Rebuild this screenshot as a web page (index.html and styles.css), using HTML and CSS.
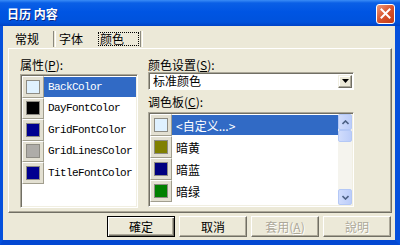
FILE: index.html
```html
<!DOCTYPE html>
<html lang="zh">
<head>
    <meta charset="UTF-8">
    <title>日历 内容</title>
    <link rel="stylesheet" href="styles.css">
</head>
<body>
    <div class="window">
        <div class="titlebar">
            <span class="title">日历 内容</span>
            <div class="close">
                <svg width="11" height="11" viewBox="0 0 11 11">
                    <path d="M1.5 1.5 L9.5 9.5 M9.5 1.5 L1.5 9.5" stroke="#fff" stroke-width="2" stroke-linecap="square"/>
                </svg>
            </div>
        </div>

        <div class="frame">
            <div class="tabs">
                <div class="tab tab-first">常规</div>
                <div class="tab-sep"></div>
                <div class="tab tab-second">字体</div>
                <div class="tab tab-active"><span>颜色</span></div>
                <div class="tab-sep"></div>
            </div>

            <div class="panel">
                <div class="col col-left">
                    <div class="label">属性(<u>P</u>):</div>
                    <div class="list props">
                        <div class="row selected">
                            <div class="cell"><div class="swatch" style="background:#dff1ff"></div></div>
                            <div class="name">BackColor</div>
                        </div>
                        <div class="row">
                            <div class="cell"><div class="swatch" style="background:#000000"></div></div>
                            <div class="name">DayFontColor</div>
                        </div>
                        <div class="row">
                            <div class="cell"><div class="swatch" style="background:#000090"></div></div>
                            <div class="name">GridFontColor</div>
                        </div>
                        <div class="row">
                            <div class="cell"><div class="swatch" style="background:#aeaca8"></div></div>
                            <div class="name">GridLinesColor</div>
                        </div>
                        <div class="row">
                            <div class="cell"><div class="swatch" style="background:#000090"></div></div>
                            <div class="name">TitleFontColor</div>
                        </div>
                    </div>
                </div>

                <div class="col col-right">
                    <div class="label">颜色设置(<u>S</u>):</div>
                    <div class="combo">
                        <span class="combo-text">标准颜色</span>
                        <div class="drop">
                            <svg width="7" height="4" viewBox="0 0 7 4"><path d="M0 0 H7 L3.5 4 Z" fill="#000"/></svg>
                        </div>
                    </div>
                    <div class="label label-palette">调色板(<u>C</u>):</div>
                    <div class="list palette">
                        <div class="rows">
                            <div class="row prow selected">
                                <div class="cell"><div class="swatch" style="background:#dff1ff"></div></div>
                                <div class="name">&lt;自定义...&gt;</div>
                            </div>
                            <div class="row prow">
                                <div class="cell"><div class="swatch" style="background:#808000"></div></div>
                                <div class="name">暗黄</div>
                            </div>
                            <div class="row prow">
                                <div class="cell"><div class="swatch" style="background:#000080"></div></div>
                                <div class="name">暗蓝</div>
                            </div>
                            <div class="row prow">
                                <div class="cell"><div class="swatch" style="background:#008000"></div></div>
                                <div class="name">暗绿</div>
                            </div>
                        </div>
                        <div class="vscroll">
                            <div class="sbtn">
                                <svg width="7" height="5" viewBox="0 0 7 5"><path d="M0.5 4 L3.5 1 L6.5 4" fill="none" stroke="#4d6185" stroke-width="1.6"/></svg>
                            </div>
                            <div class="thumb"></div>
                            <div class="track"></div>
                            <div class="sbtn">
                                <svg width="7" height="5" viewBox="0 0 7 5"><path d="M0.5 1 L3.5 4 L6.5 1" fill="none" stroke="#4d6185" stroke-width="1.6"/></svg>
                            </div>
                        </div>
                    </div>
                </div>
            </div>

            <div class="buttons">
                <div class="btn btn-default">確定</div>
                <div class="btn">取消</div>
                <div class="btn disabled">套用(<u>A</u>)</div>
                <div class="btn disabled">說明</div>
            </div>
        </div>
    </div>
</body>
</html>
```

FILE: styles.css
```css
body {
    margin: 0;
    width: 400px;
    height: 245px;
    overflow: hidden;
    font-family: "Noto Sans CJK SC", "Liberation Sans", sans-serif;
    font-size: 12px;
    color: #000;
}
.window {
    width: 400px;
    height: 245px;
}
.titlebar {
    height: 26px;
    display: flex;
    align-items: center;
    justify-content: space-between;
    padding: 1px 5px 0 7px;
    box-sizing: border-box;
    background: linear-gradient(#3a8cf6 0, #0a5fe6 3px, #0055e3 45%, #0052dc 85%, #0043c6 100%);
}
.title {
    color: #fff;
    font-weight: bold;
    font-size: 12px;
    line-height: 14px;
    padding-top: 1px;
    text-shadow: 1px 1px #0a2a8a;
}
.close {
    width: 19px;
    height: 20px;
    box-sizing: border-box;
    border: 1px solid #fff;
    border-radius: 3px;
    background: linear-gradient(135deg, #ee9a7c, #d8532c 50%, #c23c16);
    display: flex;
    align-items: center;
    justify-content: center;
}
.frame {
    height: 219px;
    box-sizing: border-box;
    border-left: 3px solid #0550dc;
    border-right: 5px solid #0550dc;
    border-bottom: 5px solid #0348d2;
    background: #ece9d8;
}

/* tabs */
.tabs {
    height: 22px;
    display: flex;
    align-items: center;
    padding-left: 5px;
    padding-top: 4px;
    box-sizing: border-box;
}
.tab {
    line-height: 14px;
    height: 14px;
}
.tab-first {
    width: 44px;
    padding-left: 7px;
    box-sizing: border-box;
}
.tab-second {
    width: 42px;
    padding-left: 3px;
    box-sizing: border-box;
}
.tab-active span {
    display: block;
    width: 41px;
    height: 14px;
    box-sizing: border-box;
    padding-left: 1px;
    border: 1px dotted #000;
    line-height: 12px;
}
.tab-sep {
    width: 1px;
    height: 16px;
    border-left: 1px solid #8b897e;
    border-right: 1px solid #fff;
    margin-left: 1px;
}

/* panel */
.panel {
    margin-left: 5px;
    width: 384px;
    height: 165px;
    box-sizing: border-box;
    border: 1px solid;
    border-color: #fff #716f64 #716f64 #fff;
    box-shadow: inset -1px -1px #aca899;
    padding: 8px 0 0 11px;
    display: flex;
    gap: 10px;
}
.col-left {
    width: 118px;
}
.col-right {
    width: 206px;
}
.label {
    line-height: 15px;
    height: 15px;
    margin-bottom: 2px;
}
.col-right .label {
    margin-bottom: 0;
}
.label-palette {
    margin-top: 4px;
    height: 16px;
    line-height: 16px;
}

.list {
    box-sizing: border-box;
    border: 1px solid;
    border-color: #aca899 #fff #fff #aca899;
    box-shadow: inset 1px 1px #716f64, inset -1px -1px #f1efe2;
    background: #fff;
    padding: 1px;
}
.props {
    height: 134px;
}
.palette {
    height: 95px;
    margin-top: 2px;
    display: flex;
}
.rows {
    flex: 1;
}
.row {
    display: flex;
    height: 21.5px;
}
.prow {
    height: 22px;
}
.cell {
    width: 22px;
    box-sizing: border-box;
    background: #e3e0d2;
    border: 1px solid;
    border-color: #fff #a19e8e #a19e8e #fff;
    display: flex;
    align-items: center;
    justify-content: center;
}
.swatch {
    width: 14px;
    height: 14px;
    box-sizing: border-box;
    border: 1px solid #8e8c84;
}
.name {
    flex: 1;
    display: flex;
    align-items: center;
    padding-left: 4px;
    margin: 1px 0;
}
.props .name {
    font-family: "Liberation Mono", monospace;
    font-size: 11px;
    letter-spacing: -0.6px;
}
.row.selected .name {
    background: #316ac5;
    color: #fff;
}

/* scrollbar */
.vscroll {
    width: 14px;
    display: flex;
    flex-direction: column;
    background: #f5f4ee;
}
.sbtn, .thumb {
    box-sizing: border-box;
    border: 1px solid #b4c8f6;
    border-radius: 2px;
    background: linear-gradient(90deg, #d0dcfc, #bccdf9);
}
.sbtn {
    height: 16px;
    display: flex;
    align-items: center;
    justify-content: center;
}
.thumb {
    height: 12px;
}
.track {
    flex: 1;
}

/* combo */
.combo {
    height: 18px;
    box-sizing: border-box;
    border: 1px solid;
    border-color: #aca899 #fff #fff #aca899;
    box-shadow: inset 1px 1px #716f64;
    background: #fff;
    display: flex;
    align-items: center;
    justify-content: space-between;
    padding: 0 1px 0 4px;
}
.combo-text {
    line-height: 14px;
}
.drop {
    width: 14px;
    height: 13px;
    box-sizing: border-box;
    background: #ece9d8;
    border: 1px solid;
    border-color: #f1efe2 #716f64 #716f64 #f1efe2;
    box-shadow: inset -1px -1px #aca899, inset 1px 1px #fff;
    display: flex;
    align-items: center;
    justify-content: center;
}

/* buttons */
.buttons {
    display: flex;
    justify-content: flex-end;
    gap: 4px;
    margin-top: 3px;
    padding-right: 4px;
}
.btn {
    width: 68px;
    height: 21px;
    box-sizing: border-box;
    border: 1px solid;
    border-color: #fff #716f64 #716f64 #fff;
    box-shadow: inset -1px -1px #aca899;
    display: flex;
    align-items: center;
    justify-content: center;
    line-height: 14px;
}
.btn-default {
    border: 1px solid #000;
    box-shadow: inset 1px 1px #fff, inset -1px -1px #716f64, inset -2px -2px #aca899;
}
.btn.disabled {
    color: #aca899;
    text-shadow: 1px 1px #fff;
}
```
